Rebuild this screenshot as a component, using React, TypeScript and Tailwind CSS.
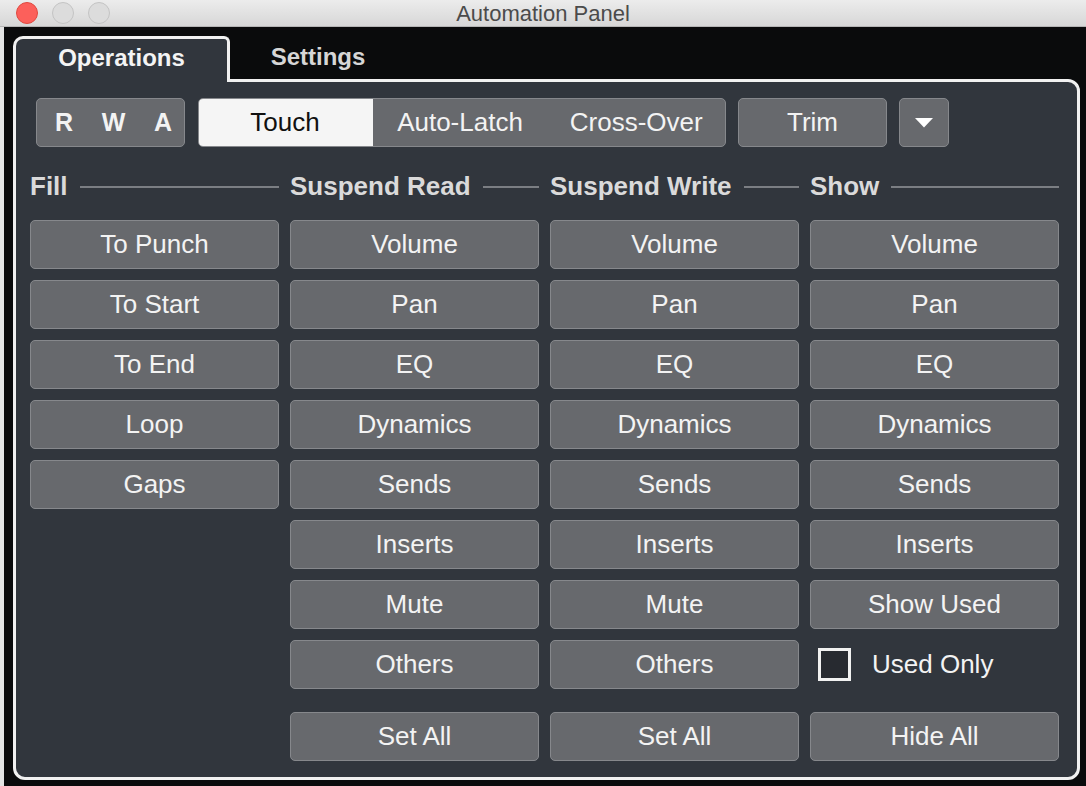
const btn =
  "h-[49px] flex items-center justify-center rounded-[5px] border-[1.5px] border-[#86888c] bg-[#67696d] text-[26px] text-[#f3f3f3]";

function Btn({ label }: { label: string }) {
  return <div className={btn}>{label}</div>;
}

function Header({ label }: { label: string }) {
  return (
    <div className="flex items-center gap-[12px]">
      <span className="text-[26px] font-bold text-[#dadada] whitespace-nowrap">{label}</span>
      <div className="flex-1 h-[2px] bg-[#7b7e83]" />
    </div>
  );
}

const channels = ["Volume", "Pan", "EQ", "Dynamics", "Sends", "Inserts", "Mute", "Others"];

export default function App() {
  return (
    <div className="w-[1086px] h-[786px] bg-[#0a0b0c] flex flex-col font-['Liberation_Sans',Arial,sans-serif] overflow-hidden">
      {/* title bar */}
      <div className="relative h-[27px] shrink-0 flex items-center bg-gradient-to-b from-[#ececec] to-[#d7d7d7] border-b border-[#b5b5b5]">
        <div className="flex items-center gap-[14px] pl-[16px]">
          <div className="w-[22px] h-[22px] rounded-full bg-[#fc605b] border border-[#e0493f]" />
          <div className="w-[22px] h-[22px] rounded-full bg-[#dcdcdc] border border-[#c4c4c4]" />
          <div className="w-[22px] h-[22px] rounded-full bg-[#dcdcdc] border border-[#c4c4c4]" />
        </div>
        <div className="absolute inset-0 flex items-center justify-center text-[22px] text-[#4b4b4b]">
          Automation Panel
        </div>
      </div>

      {/* body */}
      <div className="flex-1 flex flex-col border-l-[4px] border-[#e4e4e4] pl-[9px] pr-[6px] pt-[9px] pb-[6px]">
        {/* tabs */}
        <div className="flex items-end h-[43px] shrink-0">
          <div className="relative z-10 w-[217px] h-[46px] -mb-[3px] flex items-center justify-center rounded-tl-[10px] rounded-tr-[6px] border-[3px] border-b-0 border-[#f1f1f1] bg-[#31363d] text-[24px] font-bold text-[#f4f4f4] pb-[5px]">
            Operations
          </div>
          <div className="w-[176px] h-[43px] flex items-center justify-center text-[24px] font-bold text-[#d6d6d6] pb-[2px]">
            Settings
          </div>
        </div>

        {/* panel */}
        <div className="flex-1 flex flex-col rounded-tr-[12px] rounded-b-[12px] border-[3px] border-[#f1f1f1] bg-[#31363d] pt-[16px] pl-[14px] pr-[18px]">
          {/* mode row */}
          <div className="ml-[6px] flex items-center h-[49px]">
            <div className="w-[149px] h-[49px] flex items-center justify-between pl-[18px] pr-[12px] rounded-[5px] border-[1.5px] border-[#86888c] bg-[#67696d] text-[25px] font-bold text-[#f3f3f3]">
              <span>R</span>
              <span>W</span>
              <span>A</span>
            </div>
            <div className="ml-[13px] w-[528px] h-[49px] flex rounded-[5px] border-[1.5px] border-[#86888c] bg-[#67696d] text-[26px] text-[#f3f3f3] overflow-hidden">
              <div className="w-[175px] -m-[1.5px] mr-0 flex items-center justify-center bg-[#f5f5f5] text-[#111] rounded-l-[5px]">
                Touch
              </div>
              <div className="w-[175px] flex items-center justify-center">Auto-Latch</div>
              <div className="flex-1 flex items-center justify-center">Cross-Over</div>
            </div>
            <div className={`${btn} ml-[12px] w-[149px]`}>Trim</div>
            <div className={`${btn} ml-[12px] w-[50px]`}>
              <svg width="20" height="11" viewBox="0 0 20 11">
                <path d="M1 1h18L10 10.5z" fill="#ffffff" />
              </svg>
            </div>
          </div>

          {/* headers */}
          <div className="mt-[20px] h-[30px] grid grid-cols-4 gap-x-[11px] items-center">
            <Header label="Fill" />
            <Header label="Suspend Read" />
            <Header label="Suspend Write" />
            <Header label="Show" />
          </div>

          {/* buttons */}
          <div className="mt-[23px] grid grid-cols-4 gap-x-[11px]">
            <div className="flex flex-col gap-[11px]">
              {["To Punch", "To Start", "To End", "Loop", "Gaps"].map((l) => (
                <Btn key={l} label={l} />
              ))}
            </div>
            <div className="flex flex-col gap-[11px]">
              {channels.map((l) => (
                <Btn key={l} label={l} />
              ))}
              <div className="mt-[12px]">
                <Btn label="Set All" />
              </div>
            </div>
            <div className="flex flex-col gap-[11px]">
              {channels.map((l) => (
                <Btn key={l} label={l} />
              ))}
              <div className="mt-[12px]">
                <Btn label="Set All" />
              </div>
            </div>
            <div className="flex flex-col gap-[11px]">
              {channels.slice(0, 6).map((l) => (
                <Btn key={l} label={l} />
              ))}
              <Btn label="Show Used" />
              <div className="h-[49px] flex items-center pl-[8px] gap-[21px]">
                <div className="w-[33px] h-[33px] border-[3px] border-[#f1f1f1] bg-[#272a30]" />
                <span className="text-[26px] text-[#f3f3f3]">Used Only</span>
              </div>
              <div className="mt-[12px]">
                <Btn label="Hide All" />
              </div>
            </div>
          </div>
        </div>
      </div>
    </div>
  );
}
